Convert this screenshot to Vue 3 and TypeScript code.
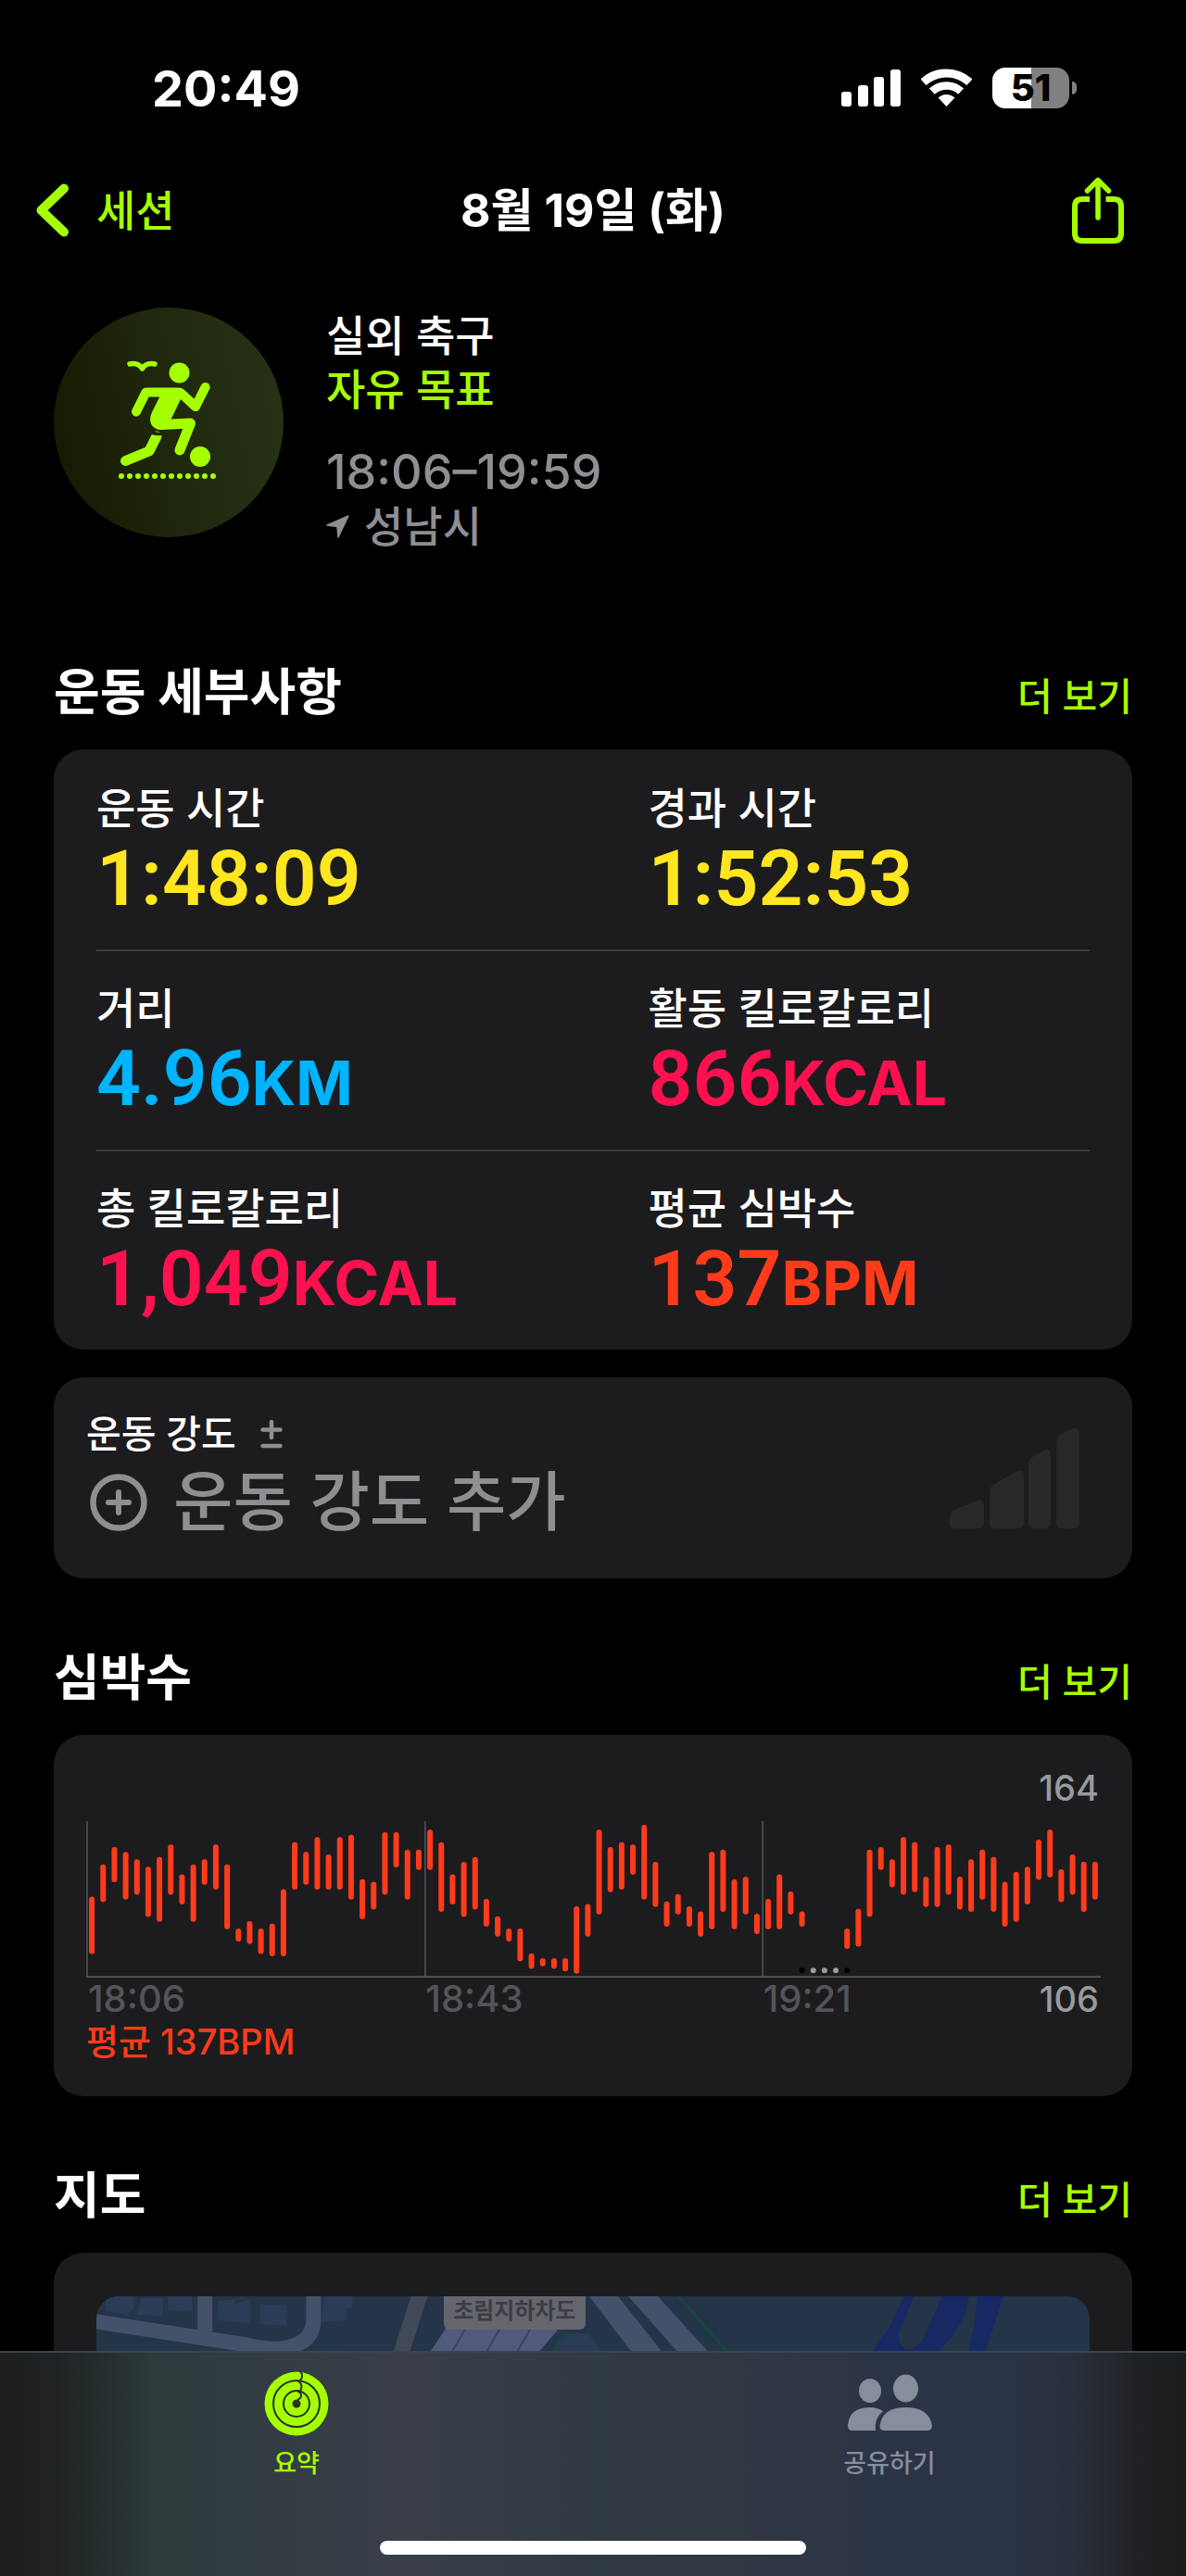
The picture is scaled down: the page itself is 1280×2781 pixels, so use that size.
<script setup lang="ts">
interface Stat {
  label: string
  value: string
  unit: string
  tone: string
}

const statRows: Stat[][] = [
  [
    { label: '운동 시간', value: '1:48:09', unit: '', tone: 'yellow' },
    { label: '경과 시간', value: '1:52:53', unit: '', tone: 'yellow' },
  ],
  [
    { label: '거리', value: '4.96', unit: 'KM', tone: 'blue' },
    { label: '활동 킬로칼로리', value: '866', unit: 'KCAL', tone: 'pink' },
  ],
  [
    { label: '총 킬로칼로리', value: '1,049', unit: 'KCAL', tone: 'pink' },
    { label: '평균 심박수', value: '137', unit: 'BPM', tone: 'red' },
  ],
]

// Highest and lowest heart rate per slot; null where nothing was recorded.
const ranges: ([number, number] | null)[] = [
  [135, 114], [148, 135], [155, 143], [153, 136], [150, 138], [147, 129], [151, 127], [156, 138], [144, 134], [148, 127],
  [150, 142], [156, 140], [148, 124], [122, 119], [125, 118], [122, 114], [124, 113], [138, 113], [157, 140], [153, 142],
  [159, 140], [152, 140], [159, 140], [160, 136], [142, 128], [141, 132], [161, 138], [161, 149], [154, 136], [154, 148],
  [162, 148], [157, 131], [144, 134], [149, 129], [151, 132], [134, 125], [127, 121], [122, 119], [122, 111], [112, 108],
  [110, 109], [110, 108], [110, 107], [131, 106], [132, 121], [162, 130], [155, 139], [157, 140], [156, 146], [164, 136],
  [149, 133], [133, 125], [136, 130], [131, 125], [129, 121], [153, 124], [154, 131], [142, 124], [143, 130], [128, 122],
  [134, 124], [144, 124], [137, 130], [129, 125], null, null, null, [122, 116], [130, 117], [154, 129],
  [155, 148], [150, 141], [159, 138], [157, 139], [143, 133], [155, 133], [156, 138], [143, 132], [150, 131], [154, 136],
  [151, 131], [141, 125], [145, 127], [147, 134], [158, 144], [162, 145], [146, 135], [152, 138], [149, 131], [149, 136],
]

const chartWidth = 1094
const slot = chartWidth / ranges.length
const xOf = (i: number): number => slot * (i + 0.5)
const yOf = (bpm: number): number => 7 + ((164 - bpm) * 8) / 3

const bars = ranges.flatMap((r, i) => (r ? [{ x: xOf(i), y1: yOf(r[0]), y2: yOf(r[1]) }] : []))
const gapDots = [63, 64, 65, 66, 67].map((i) => ({ x: xOf(i), known: ranges[i] !== null }))
const groundDots = Array.from({ length: 12 }, (_, i) => 73 + i * 9)
</script>

<template>
  <div class="screen">
    <div class="scroll">
      <div class="status">
        <span class="clock">20:49</span>
        <div class="status-icons">
          <svg width="64" height="40" viewBox="0 0 64 40" fill="#fff" aria-hidden="true">
            <rect x="0" y="24" width="11" height="16" rx="3" />
            <rect x="18" y="17" width="11" height="23" rx="3" />
            <rect x="35" y="8" width="11" height="32" rx="3" />
            <rect x="53" y="0" width="11" height="40" rx="3" />
          </svg>
          <svg width="55" height="42" viewBox="0 0 55 42" aria-hidden="true">
            <g fill="none" stroke="#fff">
              <path d="M2.6 14.8A36.5 36.5 0 0 1 52.4 14.8" stroke-width="9" />
              <path d="M11.8 24.7A23 23 0 0 1 43.2 24.7" stroke-width="8.500" />
            </g>
            <path d="M27.500 41L18.600 31.500A13 13 0 0 1 36.400 31.500Z" fill="#fff" />
          </svg>
          <div class="battery">
            <span class="battery-body">51</span>
            <span class="battery-nub"></span>
          </div>
        </div>
      </div>

      <header class="nav">
        <a href="#sessions" class="back">
          <svg width="36" height="58" viewBox="0 0 36 58" fill="none" stroke="currentColor" stroke-width="10" stroke-linecap="round" stroke-linejoin="round" aria-hidden="true">
            <path d="M30 5.500L5.500 29L30 52.500" />
          </svg>
          <span>세션</span>
        </a>
        <h1>8월 19일 (화)</h1>
        <button type="button" class="share" aria-label="공유">
          <svg width="56" height="72" viewBox="0 0 56 72" fill="none" stroke="currentColor" stroke-width="6" aria-hidden="true">
            <path d="M19 24H11Q3 24 3 32V61Q3 69 11 69H45Q53 69 53 61V32Q53 24 45 24H36.500" />
            <path d="M28 44V4M16.500 15L28 3.500L39.500 15" stroke-width="5.500" stroke-linecap="round" stroke-linejoin="round" />
          </svg>
        </button>
      </header>

      <section class="hero">
        <svg class="badge" width="248" height="248" viewBox="0 0 248 248" aria-hidden="true">
          <defs>
            <linearGradient id="badge-fill" x1="0" y1="0.6" x2="1" y2="0.4">
              <stop offset="0" stop-color="#171a00" />
              <stop offset="0.5" stop-color="#1f280e" />
              <stop offset="1" stop-color="#273214" />
            </linearGradient>
          </defs>
          <circle cx="124" cy="124" r="124" fill="url(#badge-fill)" />
          <g fill="none" stroke="#a6ff00" stroke-linecap="round" stroke-linejoin="round">
            <path d="M82 61Q91 59 95.500 66Q100 59 109 61" stroke-width="5.500" />
            <path d="M89 112.500L99.500 91.500H134Q137 91.500 139 94L153 107L163.600 86" stroke-width="10" />
            <path d="M115 126.500L147.500 125L136 154" stroke-width="11" />
            <path d="M111 139L103 155L77.500 165.500" stroke-width="11" />
          </g>
          <path d="M112 90L140 92L136 101L125 124L120 132Q105 133 104 121Q104 117 106 113L114 97Z" fill="#a6ff00" />
          <path d="M101 132Q110 139 122 135" fill="none" stroke="#1e270d" stroke-width="3.500" />
          <circle cx="135.500" cy="70.500" r="11" fill="#a6ff00" />
          <circle cx="158" cy="161" r="11" fill="#a6ff00" />
          <circle v-for="x in groundDots" :key="x" :cx="x" cy="182" r="3" fill="#a6ff00" />
        </svg>
        <div class="hero-text">
          <p>실외 축구</p>
          <p class="goal">자유 목표</p>
          <p class="muted when">18:06–19:59</p>
          <p class="muted place">
            <svg width="25" height="25" viewBox="0 0 25 25" aria-hidden="true">
              <path d="M1 11L24 1L13 24L12 12.500Z" fill="currentColor" stroke="currentColor" stroke-width="1.500" stroke-linejoin="round" />
            </svg>
            <span>성남시</span>
          </p>
        </div>
      </section>

      <main>
        <section class="details">
          <div class="heading">
            <h2>운동 세부사항</h2>
            <a href="#details">더 보기</a>
          </div>
          <div class="card stats">
            <dl v-for="(row, r) in statRows" :key="r" class="row">
              <div v-for="s in row" :key="s.label">
                <dt>{{ s.label }}</dt>
                <dd :class="s.tone">{{ s.value }}<span v-if="s.unit" class="unit">{{ s.unit }}</span></dd>
              </div>
            </dl>
          </div>
          <div class="card effort">
            <div>
              <div class="effort-label">
                <span>운동 강도</span>
                <svg width="24" height="32" viewBox="0 0 24 32" fill="none" stroke="#8e8e93" stroke-width="4.500" stroke-linecap="round" aria-hidden="true">
                  <path d="M12 3V20M2.500 11.500H21.500M2.500 29H21.500" />
                </svg>
              </div>
              <button type="button" class="effort-add">
                <svg width="62" height="62" viewBox="0 0 62 62" fill="none" stroke="currentColor" stroke-width="6.500" stroke-linecap="round" aria-hidden="true">
                  <circle cx="31" cy="31" r="27.500" />
                  <path d="M31 20V42M20 31H42" stroke-width="6" />
                </svg>
                <span>운동 강도 추가</span>
              </button>
            </div>
            <svg class="effort-bars" width="140" height="108" viewBox="0 0 140 108" fill="#28282a" aria-hidden="true">
              <path d="M0 96Q0 92 3 89L29 78Q37 75 37 84V102Q37 108 31 108H6Q0 108 0 102Z" />
              <path d="M43 69Q43 64 47 61L71 47Q80 42 80 52V102Q80 108 74 108H49Q43 108 43 102Z" />
              <path d="M85 39Q85 34 89 31L101 24Q109 19 109 29V102Q109 108 103 108H91Q85 108 85 102Z" />
              <path d="M115 16Q115 10 119 7L131 1Q140 -3 140 7V102Q140 108 134 108H121Q115 108 115 102Z" />
            </svg>
          </div>
        </section>

        <section>
          <div class="heading">
            <h2>심박수</h2>
            <a href="#heart">더 보기</a>
          </div>
          <div class="card heart">
            <div class="peak">164</div>
            <svg class="chart" :viewBox="`0 0 ${chartWidth} 169`" role="img" aria-label="심박수">
              <g stroke="#56565a" stroke-width="2">
                <path d="M1 0V168M365.500 0V168M729.500 0V168" stroke-width="1.500" fill="none" />
                <path d="M0 168H1094" />
              </g>
              <g stroke="#ff3b1c" stroke-width="6" stroke-linecap="round">
                <line v-for="b in bars" :key="b.x" :x1="b.x" :x2="b.x" :y1="b.y1" :y2="b.y2" />
              </g>
              <circle v-for="d in gapDots" :key="d.x" :cx="d.x" cy="161" r="3" :fill="d.known ? '#000' : '#9a9a9f'" />
            </svg>
            <div class="ticks">
              <span>18:06</span>
              <span>18:43</span>
              <div class="last">
                <span>19:21</span>
                <span class="low">106</span>
              </div>
            </div>
            <p class="average">평균 137BPM</p>
          </div>
        </section>

        <section>
          <div class="heading">
            <h2>지도</h2>
            <a href="#map">더 보기</a>
          </div>
          <div class="card map-card">
            <div class="map">
              <svg viewBox="0 0 1070 400" preserveAspectRatio="xMidYMin slice" aria-hidden="true">
                <rect width="1070" height="400" fill="#243449" />
                <path d="M10 0H40V14L34 20L10 16ZM48 2H72V22L44 20ZM77 0H103V17L77 15ZM131 5L150 3V8L166 3V29L131 26ZM176 9H205V32L176 30ZM246 0H276V12L270 14V26L242 28Z" fill="#2b3c56" />
                <path d="M-8 26L160 52Q190 60 210 54Q234 48 234 24V-4M117 -4V38" fill="none" stroke="#43526a" stroke-width="16" />
                <path d="M339 0H357L337 62H319Z" fill="#414858" />
                <path d="M400 0H528L475 62H358Z" fill="#505a7d" />
                <path d="M418 0L382 62M455 0L419 62M488 0L452 62" stroke="#3b4268" stroke-width="2" />
                <path d="M492 62Q500 40 515 40H530L546 62Z" fill="#2a3b55" />
                <path d="M492 62Q498 42 509 41M627 0L682 62" stroke="#16463f" stroke-width="3" fill="none" />
                <path d="M531 0H562L611 62H578ZM573 0H605L661 62H628Z" fill="#43526a" />
                <path d="M870 0H881L864 40Q864 56 875 57Q886 56 892 44L911 0H940Q935 36 903 62H836L842 50L854 34ZM949 0H977L957 62H939L946 30Z" fill="#172963" />
              </svg>
              <span class="map-label">초림지하차도</span>
            </div>
          </div>
        </section>
      </main>
    </div>

    <nav class="tabs">
      <div class="tab-row">
        <a href="#summary" class="tab active">
          <svg width="70" height="70" viewBox="0 0 70 70" aria-hidden="true">
            <circle cx="35" cy="35" r="34.500" fill="#a6ff00" />
            <g fill="none" stroke="#26332d" stroke-width="2">
              <circle cx="35" cy="35" r="25" />
              <circle cx="35" cy="35" r="14" />
              <path d="M39 0Q43 5 39 10M36 10Q43 14 39 21M36 21Q42 24 39 29L36 31" />
            </g>
            <circle cx="35" cy="35" r="4.500" fill="#26332d" />
          </svg>
          <span>요약</span>
        </a>
        <a href="#sharing" class="tab">
          <svg width="92" height="70" viewBox="0 0 92 70" fill="currentColor" aria-hidden="true">
            <ellipse cx="25" cy="21" rx="12" ry="13" />
            <ellipse cx="63.500" cy="18.500" rx="13.500" ry="15" />
            <path d="M6 64Q1 64 1 59Q2 39 25 39Q33 39 39 43Q29 51 31 64Z" />
            <path d="M41 64Q35 64 35.500 59Q38 39 63.500 39Q89 39 92 59Q92 64 86 64Z" />
          </svg>
          <span>공유하기</span>
        </a>
      </div>
      <div class="home"></div>
    </nav>
  </div>
</template>

<style>
body {
  margin: 0;
  background: #000;
}
</style>

<style scoped>
.screen {
  display: flex;
  flex-direction: column;
  height: 100vh;
  background: #000;
  color: #fff;
  font-family: Inter, 'Noto Sans CJK KR', sans-serif;
  font-weight: 500;
}
.scroll {
  flex: 1;
  min-height: 0;
  overflow: hidden auto;
  scrollbar-width: none;
}
h1,
h2,
p,
dl,
dd {
  margin: 0;
}
a {
  color: #a6ff00;
  text-decoration: none;
}
button {
  padding: 0;
  border: 0;
  background: none;
  font: inherit;
}
svg {
  display: block;
  flex: none;
}
.status {
  display: flex;
  align-items: center;
  justify-content: space-between;
  height: 190px;
  padding: 0 118px 0 164px;
}
.clock {
  font-size: 54px;
  font-weight: 700;
}
.status-icons {
  display: flex;
  align-items: center;
  gap: 22px;
}
.battery {
  display: flex;
  align-items: center;
  gap: 3px;
}
.battery-body {
  width: 83px;
  border-radius: 14px;
  background: linear-gradient(90deg, #fff 50%, #808080 50%);
  color: #000;
  font-size: 40px;
  font-weight: 800;
  line-height: 44px;
  text-align: center;
}
.battery-nub {
  width: 5px;
  height: 14px;
  border-radius: 0 5px 5px 0;
  background: #808080;
}
.nav {
  display: grid;
  grid-template-columns: 1fr auto 1fr;
  align-items: center;
  height: 74px;
  padding: 0 39px;
}
.back {
  display: flex;
  align-items: center;
  gap: 29px;
  font-size: 46px;
  line-height: 58px;
}
h1 {
  font-size: 50px;
  font-weight: 700;
  line-height: 58px;
}
.share {
  justify-self: end;
  margin-right: 28px;
  color: #a6ff00;
}
.hero {
  display: flex;
  gap: 46px;
  padding: 68px 58px 0;
}
.hero-text {
  box-sizing: border-box;
  height: 248px;
  padding-top: 1px;
  font-size: 46px;
  line-height: 58px;
}
.goal {
  color: #a6ff00;
}
.muted {
  color: #8e8e93;
}
.when {
  margin-top: 32px;
  font-size: 52px;
}
.place {
  display: flex;
  align-items: center;
  gap: 16px;
}
main {
  padding: 0 58px;
}
section {
  margin-top: 75px;
}
.hero {
  margin-top: 0;
}
.details {
  margin-top: 135px;
}
.heading {
  display: flex;
  align-items: baseline;
  justify-content: space-between;
  height: 64px;
  margin-bottom: 30px;
}
h2 {
  font-size: 54px;
  font-weight: 700;
  line-height: 66px;
}
.heading a {
  font-size: 41px;
  line-height: 64px;
}
.card {
  border-radius: 32px;
  background: #1c1c1e;
}
.stats {
  padding: 0 46px;
}
.row {
  display: grid;
  grid-template-columns: 5fr 4fr;
  box-sizing: border-box;
  height: 216px;
  padding-top: 34px;
}
.row + .row {
  padding-top: 32px;
  border-top: 2px solid #3a3a3c;
}
dt {
  font-size: 46px;
  line-height: 58px;
}
dd {
  font-family: Roboto, Inter, sans-serif;
  font-size: 84px;
  font-weight: 600;
  line-height: 96px;
}
.unit {
  font-family: Inter, sans-serif;
  font-size: 66px;
  font-weight: 700;
}
.yellow {
  color: #ffe620;
}
.blue {
  color: #00b4ff;
}
.pink {
  color: #ff1150;
}
.red {
  color: #ff3b1c;
}
.effort {
  display: flex;
  align-items: center;
  justify-content: space-between;
  box-sizing: border-box;
  height: 217px;
  margin-top: 30px;
  padding: 0 57px 0 35px;
}
.effort-label {
  display: flex;
  align-items: center;
  gap: 26px;
  font-size: 41px;
  line-height: 52px;
}
.effort-add {
  display: flex;
  align-items: center;
  gap: 28px;
  padding-left: 4px;
  color: #8e8e93;
  font-size: 70px;
  line-height: 96px;
}
.heart {
  box-sizing: border-box;
  height: 390px;
  padding: 34px 34px 0 35px;
  font-size: 38px;
  line-height: 46px;
}
.peak {
  padding-right: 2px;
  color: #9a9a9f;
  text-align: right;
}
.chart {
  width: 100%;
  margin-top: 13px;
}
.ticks {
  display: grid;
  grid-template-columns: 1fr 1fr 1fr;
  padding-left: 2px;
  color: #545458;
  font-size: 40px;
}
.last {
  display: flex;
  justify-content: space-between;
  padding-right: 2px;
}
.low {
  color: #9a9a9f;
  font-size: 38px;
}
.average {
  color: #ff3b1c;
}
.map-card {
  padding: 47px 46px 46px;
}
.map {
  position: relative;
  overflow: hidden;
  border-radius: 24px;
}
.map svg {
  width: 100%;
}
.map-label {
  position: absolute;
  top: 0;
  left: 35%;
  padding: 0 10px 4px;
  border-radius: 0 0 6px 6px;
  background: #65656d;
  color: #3c3d43;
  font-size: 24px;
  font-weight: 700;
  line-height: 32px;
}
.tabs {
  display: flex;
  flex-direction: column;
  flex: none;
  align-items: center;
  justify-content: space-between;
  box-sizing: border-box;
  height: 243px;
  padding: 20px 0 23px;
  border-top: 2px solid #3a444c;
  background: linear-gradient(90deg, #1d1e1e 0, #202324 5%, #2c3b3b 13%, #323c42 22%, #3a3e49 34%, #303a42 50%, #303742 64%, #2b3347 74%, #2b3347 86%, #292f3a 91%, #1f2124 96%, #1c1d1d 100%);
}
.tab-row {
  display: flex;
  width: 100%;
}
.tab {
  display: flex;
  flex: 1;
  flex-direction: column;
  align-items: center;
  gap: 10px;
  color: #868e9d;
  font-size: 27px;
  line-height: 40px;
}
.active {
  color: #a6ff00;
}
.home {
  width: 36%;
  height: 15px;
  border-radius: 8px;
  background: #fff;
}
</style>
